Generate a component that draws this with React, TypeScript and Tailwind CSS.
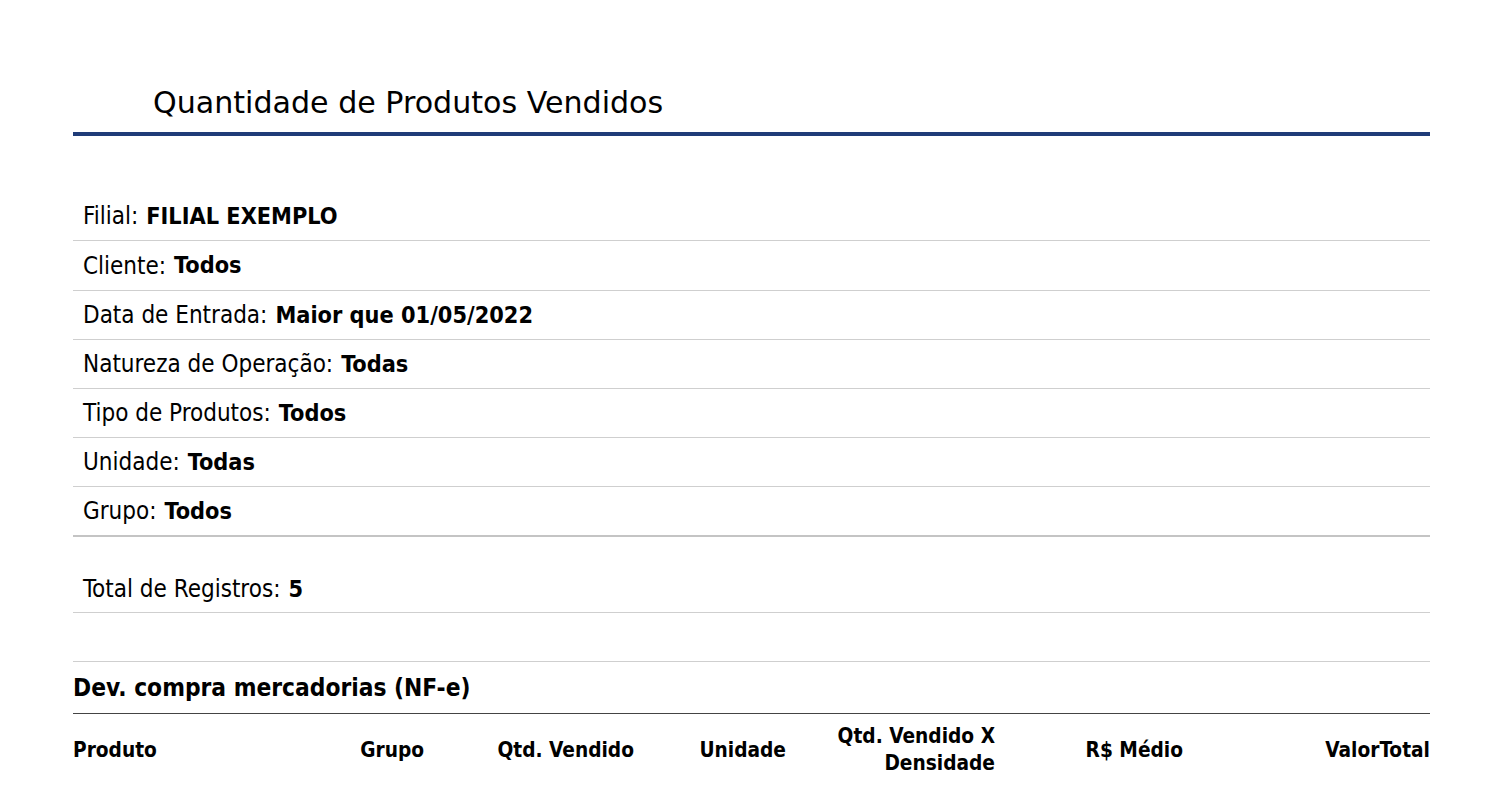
import React from 'react';

const filtros = [
  { label: 'Filial', value: 'FILIAL EXEMPLO', h: 'h-[49px]' },
  { label: 'Cliente', value: 'Todos', h: 'h-[50px]' },
  { label: 'Data de Entrada', value: 'Maior que 01/05/2022', h: 'h-[49px]' },
  { label: 'Natureza de Operação', value: 'Todas', h: 'h-[49px]' },
  { label: 'Tipo de Produtos', value: 'Todos', h: 'h-[49px]' },
  { label: 'Unidade', value: 'Todas', h: 'h-[49px]' },
];

const App: React.FC = () => {
  return (
    <div
      className="min-h-screen bg-white text-black pl-[73px] pr-[70px] pt-[81px]"
      style={{ fontFamily: '"DejaVu Sans Condensed", "DejaVu Sans", sans-serif' }}
    >
      {/* Cabeçalho */}
      <div className="border-b-4 border-[#1f3c78] pl-[80px] pb-[7px]">
        <h1 className="text-[30.1px] leading-[44px] font-['DejaVu_Sans',sans-serif]">
          Quantidade de Produtos Vendidos
        </h1>
      </div>

      {/* Filtros */}
      <div className="mt-[56px]">
        {filtros.map((f) => (
          <div key={f.label} className={`${f.h} flex items-center px-[10px] border-b border-[#cfcfcf] text-[24px]`}>
            {f.label}:<b className="ml-[8px] text-[23.3px]">{f.value}</b>
          </div>
        ))}
        <div className="h-[50px] flex items-center px-[10px] border-b-2 border-[#c4c4c4] text-[24px]">
          Grupo:<b className="ml-[8px] text-[23.3px]">Todos</b>
        </div>
        <div className="h-[76px] flex items-end pb-[5px] px-[10px] border-b border-[#cfcfcf] text-[24px]">
          Total de Registros:<b className="ml-[8px] text-[23.3px]">5</b>
        </div>
        <div className="h-[49px] border-b border-[#cfcfcf]" />
      </div>

      {/* Seção */}
      <div className="h-[52px] flex items-center pt-[1px] border-b border-[#444] text-[24.3px] font-bold">
        Dev. compra mercadorias (NF-e)
      </div>
      <div className="grid grid-cols-[260px_91px_210px_152px_209px_188px_1fr] items-center h-[72px] text-[20.7px] font-bold leading-[27px]">
        <div>Produto</div>
        <div className="text-right">Grupo</div>
        <div className="text-right">Qtd. Vendido</div>
        <div className="text-right">Unidade</div>
        <div className="text-right">
          Qtd. Vendido X
          <br />
          Densidade
        </div>
        <div className="text-right">R$ Médio</div>
        <div className="text-right">ValorTotal</div>
      </div>
    </div>
  );
};

export default App;
